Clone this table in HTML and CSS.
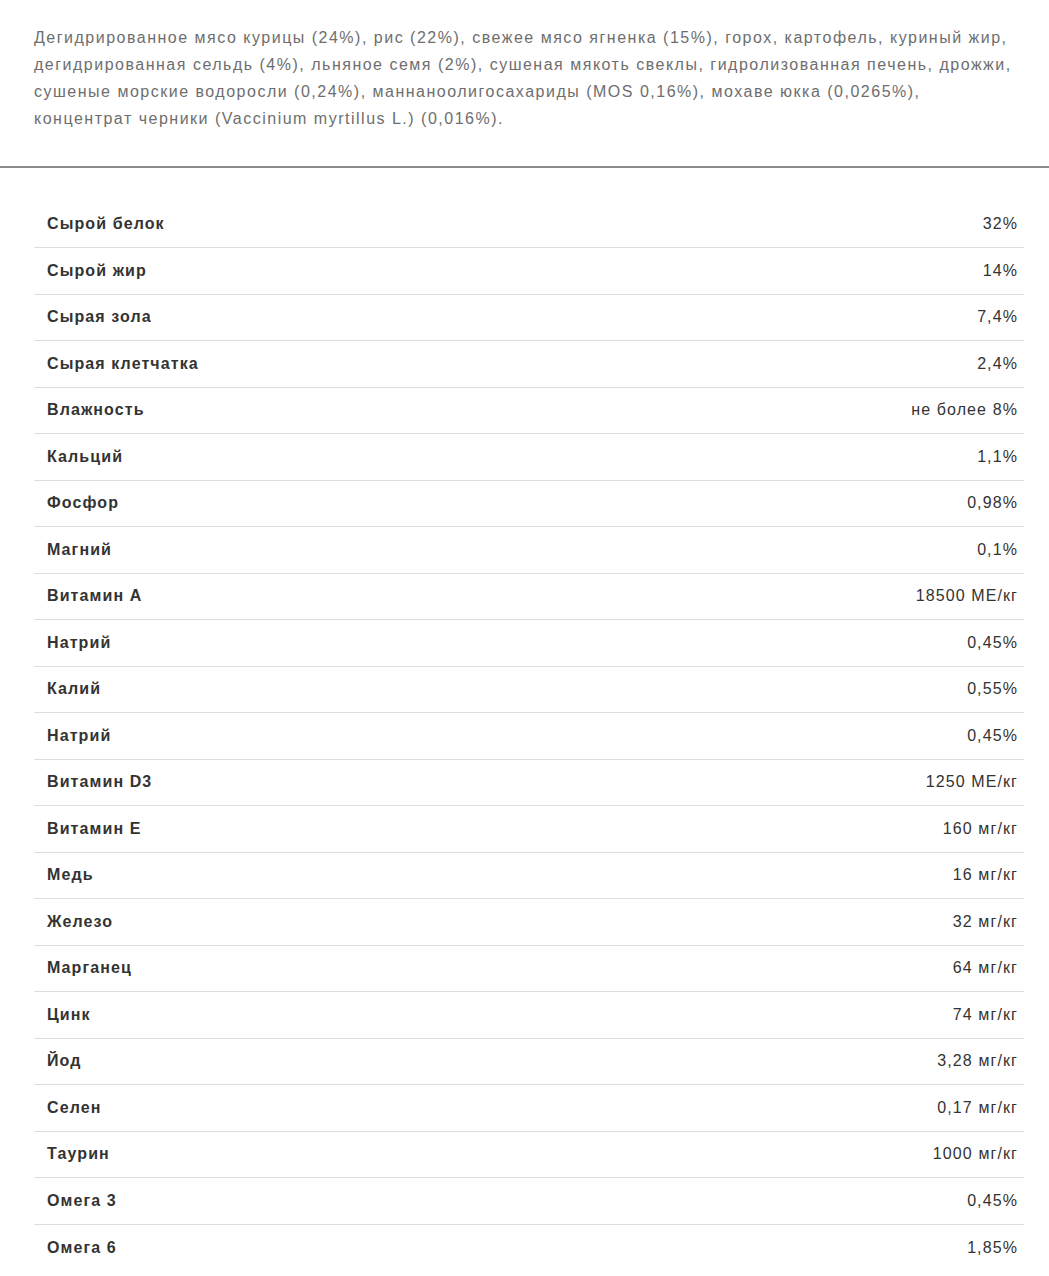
FILE: index.html
```html
<!DOCTYPE html>
<html lang="ru">
<head>
<meta charset="utf-8">
<title>Состав</title>
<link rel="stylesheet" href="styles.css">
</head>
<body>
<div class="composition">
<p class="text">Дегидрированное мясо курицы (24%), рис (22%), свежее мясо ягненка (15%), горох, картофель, куриный жир,<br>дегидрированная сельдь (4%), льняное семя (2%), сушеная мякоть свеклы, гидролизованная печень, дрожжи,<br>сушеные морские водоросли (0,24%), маннанoолигосахариды (MOS 0,16%), мохаве юкка (0,0265%),<br>концентрат черники (Vaccinium myrtillus L.) (0,016%).</p>
</div>
<hr class="divider">
<div class="analysis">
<table class="table">
<tbody>
<tr><td class="name">Сырой белок</td><td class="val">32%</td></tr>
<tr><td class="name">Сырой жир</td><td class="val">14%</td></tr>
<tr><td class="name">Сырая зола</td><td class="val">7,4%</td></tr>
<tr><td class="name">Сырая клетчатка</td><td class="val">2,4%</td></tr>
<tr><td class="name">Влажность</td><td class="val">не более 8%</td></tr>
<tr><td class="name">Кальций</td><td class="val">1,1%</td></tr>
<tr><td class="name">Фосфор</td><td class="val">0,98%</td></tr>
<tr><td class="name">Магний</td><td class="val">0,1%</td></tr>
<tr><td class="name">Витамин А</td><td class="val">18500 МЕ/кг</td></tr>
<tr><td class="name">Натрий</td><td class="val">0,45%</td></tr>
<tr><td class="name">Калий</td><td class="val">0,55%</td></tr>
<tr><td class="name">Натрий</td><td class="val">0,45%</td></tr>
<tr><td class="name">Витамин D3</td><td class="val">1250 МЕ/кг</td></tr>
<tr><td class="name">Витамин Е</td><td class="val">160 мг/кг</td></tr>
<tr><td class="name">Медь</td><td class="val">16 мг/кг</td></tr>
<tr><td class="name">Железо</td><td class="val">32 мг/кг</td></tr>
<tr><td class="name">Марганец</td><td class="val">64 мг/кг</td></tr>
<tr><td class="name">Цинк</td><td class="val">74 мг/кг</td></tr>
<tr><td class="name">Йод</td><td class="val">3,28 мг/кг</td></tr>
<tr><td class="name">Селен</td><td class="val">0,17 мг/кг</td></tr>
<tr><td class="name">Таурин</td><td class="val">1000 мг/кг</td></tr>
<tr><td class="name">Омега 3</td><td class="val">0,45%</td></tr>
<tr><td class="name">Омега 6</td><td class="val">1,85%</td></tr>
</tbody>
</table>
</div>
</body>
</html>
```
FILE: styles.css
```css
html, body {
  margin: 0;
  padding: 0;
  background: #fff;
}
body {
  font-family: "Liberation Sans", Arial, sans-serif;
}
.composition {
  padding: 24px 20px 0 34px;
}
.text {
  margin: 0;
  font-size: 16px;
  line-height: 27px;
  letter-spacing: 1.5px;
  color: #6e6e6e;
  white-space: nowrap;
}
.divider {
  margin: 34px 0 0 0;
  border: 0;
  border-top: 2px solid #8c8c8c;
  height: 0;
}
.analysis {
  padding: 33px 25px 0 34px;
}
.table {
  width: 100%;
  border-collapse: collapse;
}
.table tr {
  height: 46.5px;
}
.table tr + tr td {
  border-top: 1px solid #dedede;
}
.table td {
  padding: 0;
  font-size: 16px;
  letter-spacing: 1.1px;
  color: #333;
  vertical-align: middle;
}
.name {
  padding-left: 13px !important;
  font-weight: bold;
  text-align: left;
}
.val {
  padding-right: 6px !important;
  text-align: right;
}
```
